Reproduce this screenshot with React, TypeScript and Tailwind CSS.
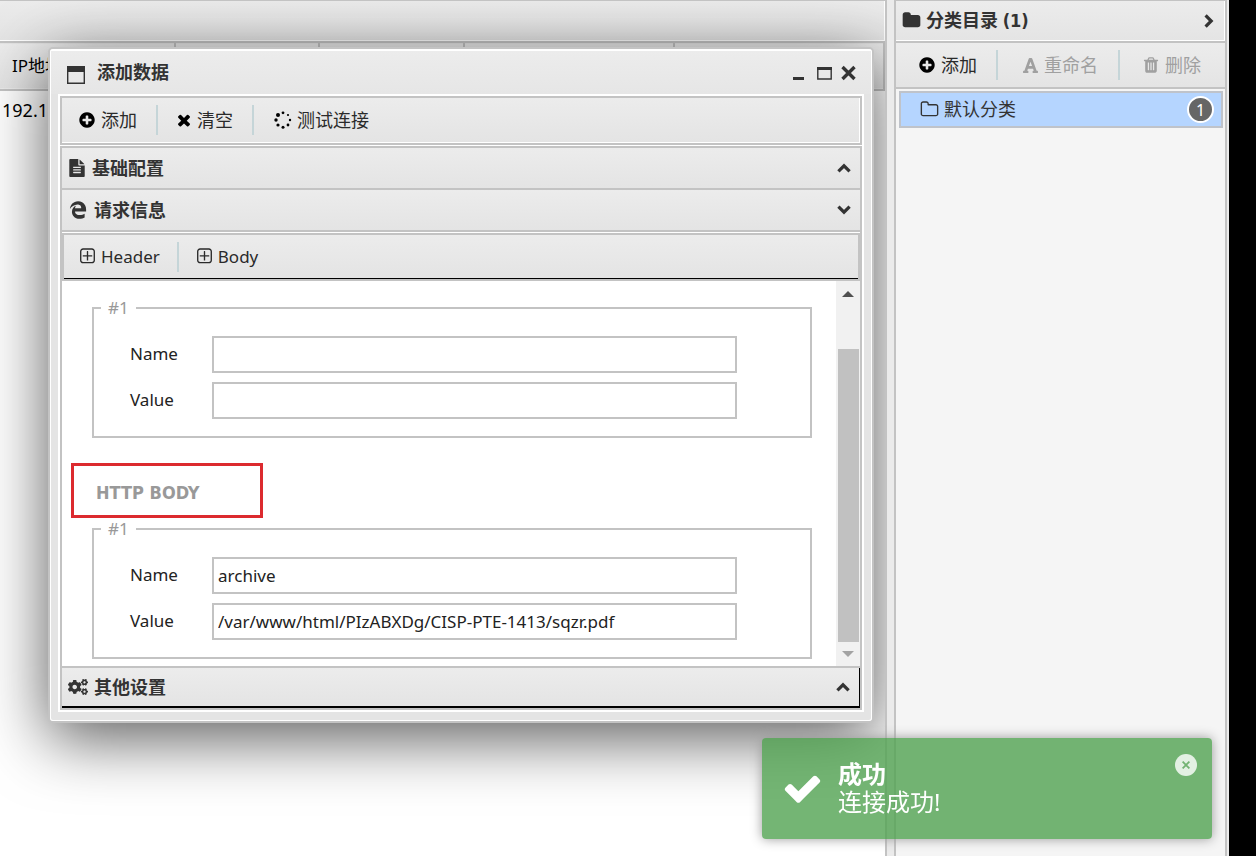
import React from "react";
import { FaCogs, FaEdgeLegacy, FaFont } from "react-icons/fa";

const paths = {
  plusCircle:
    "M1344 960v-128q0-26-19-45t-45-19h-256v-256q0-26-19-45t-45-19h-128q-26 0-45 19t-19 45v256h-256q-26 0-45 19t-19 45v128q0 26 19 45t45 19h256v256q0 26 19 45t45 19h128q26 0 45-19t19-45v-256h256q26 0 45-19t19-45zm320-64q0 209-103 385.5t-279.5 279.5-385.5 103-385.5-103-279.5-279.5-103-385.5 103-385.5 279.5-279.5 385.5-103 385.5 103 279.5 279.5 103 385.5z",
  times:
    "M1490 1322q0 40-28 68l-136 136q-28 28-68 28t-68-28l-294-294-294 294q-28 28-68 28t-68-28l-136-136q-28-28-28-68t28-68l294-294-294-294q-28-28-28-68t28-68l136-136q28-28 68-28t68 28l294 294 294-294q28-28 68-28t68 28l136 136q28 28 28 68t-28 68l-294 294 294 294q28 28 28 68z",
  check:
    "M1671 566q0 40-28 68l-724 724-136 136q-28 28-68 28t-68-28l-136-136-362-362q-28-28-28-68t28-68l136-136q28-28 68-28t68 28l294 295 656-657q28-28 68-28t68 28l136 136q28 28 28 68z",
  folderOpenLine:
    "M1600 1312v-704q0-40-28-68t-68-28h-704q-40 0-68-28t-28-68v-64q0-40-28-68t-68-28h-320q-40 0-68 28t-28 68v960q0 40 28 68t68 28h1216q40 0 68-28t28-68zm128-704v704q0 92-66 158t-158 66h-1216q-92 0-158-66t-66-158v-960q0-92 66-158t158-66h320q92 0 158 66t66 158v32h672q92 0 158 66t66 158z",
  folder:
    "M1728 608v704q0 92-66 158t-158 66h-1216q-92 0-158-66t-66-158v-960q0-92 66-158t158-66h320q92 0 158 66t66 158v32h672q92 0 158 66t66 158z",
  trash:
    "M704 1376v-704q0-14-9-23t-23-9h-64q-14 0-23 9t-9 23v704q0 14 9 23t23 9h64q14 0 23-9t9-23zm256 0v-704q0-14-9-23t-23-9h-64q-14 0-23 9t-9 23v704q0 14 9 23t23 9h64q14 0 23-9t9-23zm256 0v-704q0-14-9-23t-23-9h-64q-14 0-23 9t-9 23v704q0 14 9 23t23 9h64q14 0 23-9t9-23zm-544-992h448l-48-117q-7-9-17-11h-317q-10 2-17 11zm928 32v64q0 14-9 23t-23 9h-96v948q0 83-47 143.5t-113 60.5h-832q-66 0-113-58.5t-47-141.5v-952h-96q-14 0-23-9t-9-23v-64q0-14 9-23t23-9h309l70-167q15-37 54-63t79-26h320q40 0 79 26t54 63l70 167h309q14 0 23 9t9 23z",
  fileText:
    "M1596 476q14 14 28 36h-472v-472q22 14 36 28zm-476 164h544v1056q0 40-28 68t-68 28h-1344q-40 0-68-28t-28-68v-1600q0-40 28-68t68-28h800v544q0 40 28 68t68 28zm160 736v-64q0-14-9-23t-23-9h-704q-14 0-23 9t-9 23v64q0 14 9 23t23 9h704q14 0 23-9t9-23zm0-256v-64q0-14-9-23t-23-9h-704q-14 0-23 9t-9 23v64q0 14 9 23t23 9h704q14 0 23-9t9-23zm0-256v-64q0-14-9-23t-23-9h-704q-14 0-23 9t-9 23v64q0 14 9 23t23 9h704q14 0 23-9t9-23z",
  plusSquare:
    "M1344 800v64q0 14-9 23t-23 9h-352v352q0 14-9 23t-23 9h-64q-14 0-23-9t-9-23v-352h-352q-14 0-23-9t-9-23v-64q0-14 9-23t23-9h352v-352q0-14 9-23t23-9h64q14 0 23 9t9 23v352h352q14 0 23 9t9 23zm128 448v-832q0-66-47-113t-113-47h-832q-66 0-113 47t-47 113v832q0 66 47 113t113 47h832q66 0 113-47t47-113zm128-832v832q0 119-84.5 203.5t-203.5 84.5h-832q-119 0-203.5-84.5t-84.5-203.5v-832q0-119 84.5-203.5t203.5-84.5h832q119 0 203.5 84.5t84.5 203.5z",
};

function Icon({ name, className }: { name: keyof typeof paths; className: string }) {
  return (
    <svg viewBox="0 0 1792 1792" fill="currentColor" className={"shrink-0 " + className} aria-hidden="true">
      <path d={paths[name]} />
    </svg>
  );
}

function Spinner() {
  const dots: [number, number, number][] = [
    [9, 1.8, 1.4], [14, 4, 1.1], [16, 9, 1.2], [14, 14, 1.4],
    [9, 16.2, 1.5], [4, 14, 1.6], [2, 9, 1.7], [4, 4, 2],
  ];
  return (
    <svg viewBox="0 0 18 18" className="size-[18px] shrink-0 text-black" fill="currentColor" aria-hidden="true">
      {dots.map(([x, y, r]) => (
        <circle key={`${x}-${y}`} cx={x} cy={y} r={r} />
      ))}
    </svg>
  );
}

function Chevron({ className }: { className: string }) {
  return (
    <svg viewBox="0 0 14 10" className={"h-[10px] w-[14px] shrink-0 " + className} fill="none" stroke="#333" strokeWidth="3.2" aria-hidden="true">
      <path d="M1.4 8.4 7 2.8l5.6 5.6" />
    </svg>
  );
}

function Divider() {
  return <span className="h-[30px] w-[2px] bg-[#c5d5d8]" />;
}

function ToolButton({ className = "", children, disabled }: { className?: string; children: React.ReactNode; disabled?: boolean }) {
  return (
    <button type="button" disabled={disabled} className={"flex items-center gap-[5px] whitespace-nowrap text-[#2a2a2a] disabled:text-[#a0a0a0] " + className}>
      {children}
    </button>
  );
}

function SectionBar({ icon, title, open, className }: { icon: React.ReactNode; title: string; open?: boolean; className: string }) {
  return (
    <button type="button" aria-expanded={!!open} className={"flex w-full items-center gap-[6px] border-[#c3c3c3] bg-linear-to-b from-[#ececec] to-[#e4e4e4] pr-[9px] pl-[6px] text-left text-[18px] font-bold text-[#333] " + className}>
      {icon}
      <span className="flex-1">{title}</span>
      <Chevron className={open ? "rotate-180" : ""} />
    </button>
  );
}

function Field({ id, label, value }: { id: string; label: string; value: string }) {
  return (
    <div className="flex h-[37px] items-center">
      <label htmlFor={id} className="w-[82px] pb-[2px] text-[#222]">
        {label}
      </label>
      <input id={id} defaultValue={value} className="h-full min-w-0 flex-1 border-2 border-[#c3c3c3] bg-white px-[4px] text-[#222] outline-none" />
    </div>
  );
}

function ParamGroup({ prefix, name, value }: { prefix: string; name: string; value: string }) {
  return (
    <fieldset className="mr-[24px] ml-[30px] border-2 border-[#c3c3c3] px-[7px] pb-[17px]">
      <legend className="h-[20px] px-[7px] leading-[20px] text-[#999]">#1</legend>
      <div className="flex flex-col gap-[9px] pt-[18px] pr-[66px] pl-[29px]">
        <Field id={prefix + "-name"} label="Name" value={name} />
        <Field id={prefix + "-value"} label="Value" value={value} />
      </div>
    </fieldset>
  );
}

function DataWindow() {
  return (
    <section className="absolute top-[46px] left-[48px] w-[826px] rounded-[5px] border-2 border-[#c3c3c3] bg-[#e4e4e4] shadow-[0_15px_65px_rgba(0,0,0,0.65)]">
      <div className="rounded-[3px] border border-t-2 border-white pb-[8px]">
        <header className="flex h-[43px] items-center bg-linear-to-b from-[#ececec] to-[#e6e6e6] pr-[15px] pl-[16px]">
          <svg viewBox="0 0 18 18" className="mt-[4px] size-[18px]" fill="none" aria-hidden="true">
            <path d="M.7.7h16.6v16.6H.7z" stroke="#333" strokeWidth="1.4" />
            <path d="M0 0h18v6H0z" fill="#333" />
          </svg>
          <h1 className="ml-[12px] flex-1 text-[18px] font-bold text-[#333]">添加数据</h1>
          <div className="flex items-center gap-[12px]">
            <button type="button" aria-label="Minimize">
              <svg viewBox="0 0 12 16" className="h-[16px] w-[12px]"><path d="M0 12h11v3H0z" fill="#333" /></svg>
            </button>
            <button type="button" aria-label="Maximize">
              <svg viewBox="0 0 15 16" className="h-[16px] w-[15px]" fill="none"><path d="M.8 3h13.4v11H.8z" stroke="#333" strokeWidth="1.4" /><path d="M0 2h15v3H0z" fill="#333" /></svg>
            </button>
            <button type="button" aria-label="Close" className="-ml-[3px]">
              <svg viewBox="0 0 15 16" className="h-[16px] w-[15px]" fill="none" stroke="#333" strokeWidth="3.4"><path d="m1.5 2 12 12m0-12-12 12" /></svg>
            </button>
          </div>
        </header>
        <div className="mx-[7px] border-2 border-r-[3px] border-white bg-white">
          <div className="-mr-px border-2 border-[#c3c3c3]">
            <div className="flex h-[45px] items-center border-r border-b border-white bg-linear-to-b from-[#ececec] to-[#e4e4e4] text-[18px]">
              <ToolButton className="pr-[19px] pl-[16px]"><Icon name="plusCircle" className="size-[18px] text-black" />添加</ToolButton>
              <Divider />
              <ToolButton className="pr-[19px] pl-[17px]"><Icon name="times" className="-mr-px size-[18px] text-black" />清空</ToolButton>
              <Divider />
              <ToolButton className="px-[20px]"><Spinner />测试连接</ToolButton>
            </div>
          </div>
          <div className="mt-px -mr-px border-x-2 border-[#c3c3c3]">
            <SectionBar className="h-[42px] border-t-2" title="基础配置" icon={<Icon name="fileText" className="size-[18px]" />} />
            <SectionBar className="h-[44px] border-y-2" title="请求信息" open icon={<FaEdgeLegacy className="mx-px size-[18px]" />} />
            <div className="mt-px border-x-2 border-t-2 border-b-2 border-[#c3c3c3]">
              <div className="flex h-[44px] items-center border-b border-black bg-linear-to-b from-[#ececec] to-[#e4e4e4]">
                <ToolButton className="pr-[17px] pl-[14px]"><Icon name="plusSquare" className="-mr-px size-[19px]" />Header</ToolButton>
                <Divider />
                <ToolButton className="px-[16px]"><Icon name="plusSquare" className="-mr-px size-[19px]" />Body</ToolButton>
              </div>
            </div>
            <div className="flex h-[385px] overflow-hidden">
              <div className="flex-1 pt-[17px]">
                <ParamGroup prefix="header" name="" value="" />
                <h2 className="mt-[25px] mb-px ml-[9px] flex h-[55px] w-[192px] items-center border-[3px] border-[#dc2a2f] pt-[3px] pl-[22px] font-['DejaVu_Sans_Condensed','DejaVu_Sans',sans-serif] text-[18px] font-bold text-[#999]">HTTP BODY</h2>
                <ParamGroup prefix="body" name="archive" value="/var/www/html/PIzABXDg/CISP-PTE-1413/sqzr.pdf" />
              </div>
              <div className="flex w-[24px] flex-col items-center bg-[#f1f1f1]">
                <svg viewBox="0 0 12 6" className="mt-[10px] mb-[52px] h-[6px] w-[12px]"><path d="M0 6 6 0l6 6z" fill="#505050" /></svg>
                <span className="w-[21px] flex-1 bg-[#c1c1c1]" />
                <svg viewBox="0 0 12 6" className="my-[9px] h-[6px] w-[12px]"><path d="m0 0 6 6 6-6z" fill="#a3a3a3" /></svg>
              </div>
            </div>
            <div className="border-y-2 border-[#c3c3c3]">
              <SectionBar className="h-[40px] !border-black border-r border-b-2" title="其他设置" icon={<FaCogs className="size-[20px]" />} />
            </div>
          </div>
        </div>
      </div>
    </section>
  );
}

function Toast() {
  return (
    <div role="status" className="fixed right-[44px] bottom-[17px] flex h-[101px] w-[450px] items-center rounded-[4px] bg-[rgba(81,163,81,0.8)] pl-[20px] text-white shadow-[0_0_12px_#999]">
      <Icon name="check" className="size-[41px]" />
      <div className="ml-[15px] pb-[2px] text-[24px] leading-[28px]">
        <strong className="block">成功</strong>
        <p>连接成功!</p>
      </div>
      <button type="button" aria-label="Close" className="absolute top-[16px] right-[15px] flex size-[22px] items-center justify-center rounded-full bg-white/80 text-[#72b372]">
        <svg viewBox="0 0 8 8" className="size-[8px]" fill="none" stroke="currentColor" strokeWidth="1.8" aria-hidden="true"><path d="m.6.6 6.8 6.8m0-6.8L.6 7.4" /></svg>
      </button>
    </div>
  );
}

export default function App() {
  return (
    <div className="flex h-screen overflow-hidden bg-[#ebebeb] font-['Noto_Sans','Noto_Sans_CJK_SC',sans-serif] text-[17px] text-black">
      <main className="relative flex min-w-0 flex-1 flex-col overflow-hidden border-t border-r-2 border-[#c3c3c3] bg-white">
        <div className="h-[40px] border-r border-b border-white bg-linear-to-b from-[#ececec] to-[#e4e4e4]" />
        <table className="w-full table-fixed border-collapse">
          <thead>
            <tr className="h-[48px] border-y-2 border-[#c3c3c3] bg-linear-to-b from-[#ececec] to-[#e4e4e4]">
              <th className="w-[175px] border-r-2 border-[#c3c3c3] pl-[12px] text-left font-normal">IP地址</th>
              <th className="w-[144px] border-r-2 border-[#c3c3c3]" />
              <th className="w-[145px] border-r-2 border-[#c3c3c3]" />
              <th className="w-[210px] border-r-2 border-[#c3c3c3]" />
              <th className="border-r-2 border-[#c3c3c3]" />
            </tr>
          </thead>
          <tbody>
            <tr className="h-[40px]">
              <td className="pl-[2px] text-[18px]">192.168.1.1</td>
            </tr>
          </tbody>
        </table>
        <DataWindow />
      </main>

      <aside className="mr-[2px] ml-[7px] flex w-[333px] flex-col border-x-2 border-t border-[#c3c3c3] bg-[#f5f5f5]">
        <header className="flex h-[40px] items-center border-r border-b border-white bg-linear-to-b from-[#ececec] to-[#e4e4e4] pr-[8px] pl-[6px] text-[18px] font-bold text-[#333]">
          <Icon name="folder" className="size-[19px]" />
          <h2 className="ml-[5px] flex-1">
            分类目录 <span className="font-['DejaVu_Sans_Condensed','DejaVu_Sans',sans-serif]">(1)</span>
          </h2>
          <Chevron className="rotate-90" />
        </header>
        <div className="flex h-[48px] items-center border-y-2 border-[#c3c3c3] bg-linear-to-b from-[#ececec] to-[#e4e4e4] text-[18px]">
          <ToolButton className="pr-[19px] pl-[22px]"><Icon name="plusCircle" className="size-[18px] text-black" />添加</ToolButton>
          <Divider />
          <ToolButton disabled className="pr-[20px] pl-[24px]"><FaFont className="size-[17px]" />重命名</ToolButton>
          <Divider />
          <ToolButton disabled className="pl-[22px]"><Icon name="trash" className="size-[18px]" />删除</ToolButton>
        </div>
        <button type="button" className="mt-[2px] mr-[2px] ml-[3px] flex h-[37px] items-center border-2 border-[#bfc3ca] bg-[#b5d5ff] pr-[7px] pl-[19px] text-[18px] text-[#333]">
          <Icon name="folderOpenLine" className="size-[19px]" />
          <span className="ml-[5px] flex-1 text-left">默认分类</span>
          <span className="flex size-[27px] items-center justify-center rounded-full border-2 border-white bg-[#666] text-[16px] text-white">1</span>
        </button>
      </aside>
      <div className="w-[27px] shrink-0 bg-black" />
      <Toast />
    </div>
  );
}
